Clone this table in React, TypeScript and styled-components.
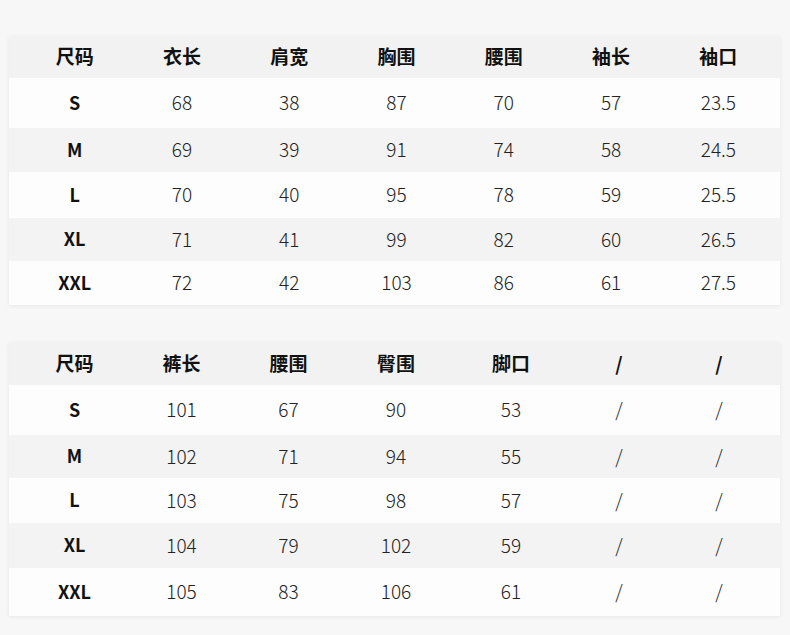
import React from "react";
import styled, { createGlobalStyle } from "styled-components";

const GlobalStyle = createGlobalStyle`
  html, body { margin: 0; padding: 0; background: #f7f7f7; }
  body { font-family: "Noto Sans CJK SC", "Noto Sans", sans-serif; }
`;

const Page = styled.div`
  width: 790px;
  height: 635px;
  box-sizing: border-box;
  padding: 36px 10px 0 9px;
  display: flex;
  flex-direction: column;
  gap: 37px;
  background: #f7f7f7;
`;

const Table = styled.div`
  display: flex;
  flex-direction: column;
  background: #fdfdfd;
  box-shadow: 0 1px 4px rgba(0, 0, 0, 0.07);
`;

const Row = styled.div<{ $cols: string; $h: number; $tone: "head" | "light" | "dark" }>`
  display: grid;
  grid-template-columns: ${(p) => p.$cols};
  height: ${(p) => p.$h}px;
  box-sizing: border-box;
  padding: 0 8px 3px 12px;
  align-items: center;
  background: ${(p) => (p.$tone === "light" ? "#fdfdfd" : p.$tone === "head" ? "#f2f2f2" : "#f3f3f3")};
`;

const HeadCell = styled.div`
  text-align: center;
  font-size: 19px;
  font-weight: 700;
  color: #111;
  line-height: 1;
`;

const SizeCell = styled.div`
  text-align: center;
  font-size: 18px;
  font-weight: 700;
  color: #111;
  line-height: 1;
`;

const ValueCell = styled.div`
  text-align: center;
  font-size: 19px;
  font-weight: 300;
  color: #222;
  line-height: 1;
`;

type TableData = {
  cols: string;
  head: string[];
  headH: number;
  rows: string[][];
  rowH: number[];
};

const tops: TableData = {
  cols: "repeat(7, 1fr)",
  head: ["尺码", "衣长", "肩宽", "胸围", "腰围", "袖长", "袖口"],
  headH: 42,
  rowH: [50, 44, 46, 43, 44],
  rows: [
    ["S", "68", "38", "87", "70", "57", "23.5"],
    ["M", "69", "39", "91", "74", "58", "24.5"],
    ["L", "70", "40", "95", "78", "59", "25.5"],
    ["XL", "71", "41", "99", "82", "60", "26.5"],
    ["XXL", "72", "42", "103", "86", "61", "27.5"],
  ],
};

const pants: TableData = {
  cols: "107px 107px 107px 108px 122px 94px 106px",
  head: ["尺码", "裤长", "腰围", "臀围", "脚口", "/", "/"],
  headH: 43,
  rowH: [50, 43, 45, 45, 48],
  rows: [
    ["S", "101", "67", "90", "53", "/", "/"],
    ["M", "102", "71", "94", "55", "/", "/"],
    ["L", "103", "75", "98", "57", "/", "/"],
    ["XL", "104", "79", "102", "59", "/", "/"],
    ["XXL", "105", "83", "106", "61", "/", "/"],
  ],
};

const SizeTable = ({ data }: { data: TableData }) => (
  <Table>
    <Row $cols={data.cols} $h={data.headH} $tone="head">
      {data.head.map((h, i) => (
        <HeadCell key={i}>{h}</HeadCell>
      ))}
    </Row>
    {data.rows.map((r, ri) => (
      <Row key={ri} $cols={data.cols} $h={data.rowH[ri]} $tone={ri % 2 === 0 ? "light" : "dark"}>
        {r.map((c, ci) =>
          ci === 0 ? <SizeCell key={ci}>{c}</SizeCell> : <ValueCell key={ci}>{c}</ValueCell>
        )}
      </Row>
    ))}
  </Table>
);

export default function App() {
  return (
    <>
      <GlobalStyle />
      <Page>
        <SizeTable data={tops} />
        <SizeTable data={pants} />
      </Page>
    </>
  );
}
